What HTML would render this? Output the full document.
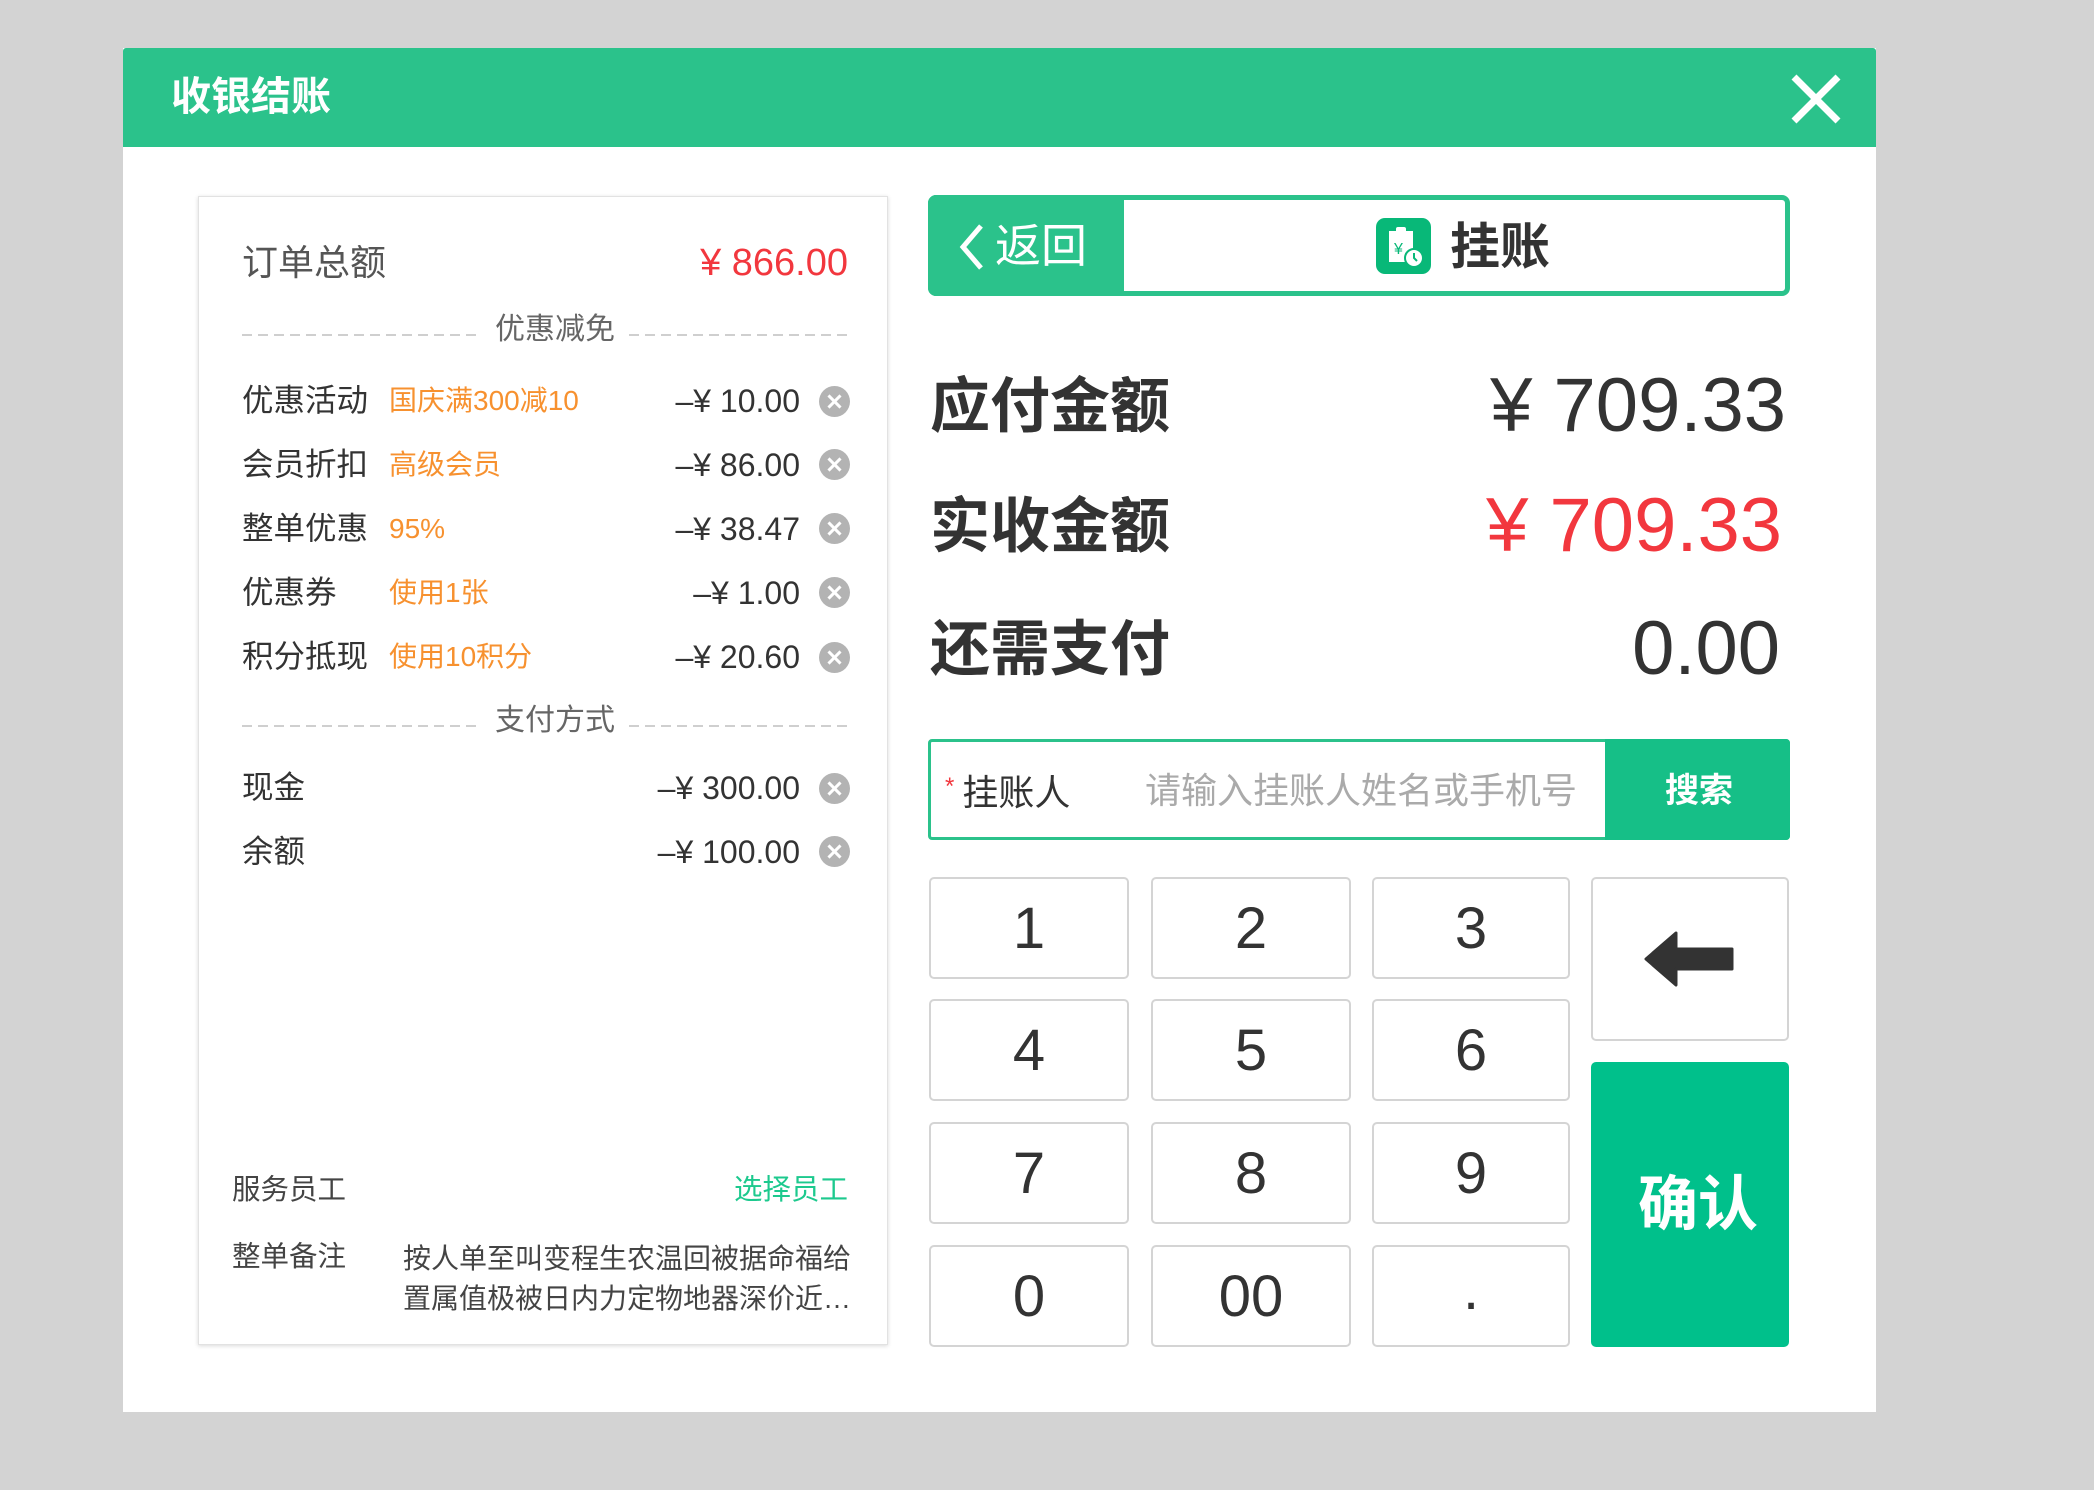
<!DOCTYPE html>
<html><head><meta charset="utf-8"><style>
*{margin:0;padding:0;box-sizing:border-box}
body{width:2094px;height:1490px;background:#d3d3d3;position:relative;overflow:hidden;font-family:"Liberation Sans","Noto Sans CJK SC",sans-serif}
.a{position:absolute;white-space:nowrap;line-height:1}
.dlg{position:absolute;left:123px;top:48px;width:1753px;height:1364px;background:#fff}
.hd{position:absolute;left:123px;top:48px;width:1753px;height:99px;background:#2bc28b;border-radius:3px 3px 0 0}
.lp{position:absolute;left:198px;top:196px;width:690px;height:1149px;background:#fff;border:1px solid #e2e2e2;box-shadow:0 1px 4px rgba(0,0,0,.15)}
.dash{position:absolute;height:2px;background:repeating-linear-gradient(90deg,#cfcfcf 0 10px,transparent 10px 16px)}
.x{position:absolute;width:31px;height:31px;border-radius:50%;background:#b3b3b3}
.x:before,.x:after{content:"";position:absolute;left:7px;top:14px;width:17px;height:3px;background:#fff;transform:rotate(45deg)}
.x:after{transform:rotate(-45deg)}
.k{position:absolute;border:2px solid #d4d4d4;border-radius:5px;background:#fff;font-size:58px;color:#333;display:flex;align-items:center;justify-content:center}
.g{color:#333}
.m{font-size:32px;color:#333}
</style></head><body>
<div class="dlg"></div>
<div class="hd"></div>
<div class="a" style="left:171px;top:77px;font-size:40px;color:#fff;font-weight:bold">收银结账</div>
<svg class="a" style="left:1790px;top:73px" width="52" height="52"><path d="M4 4L48 48M48 4L4 48" stroke="#fff" stroke-width="7"/></svg>

<div class="lp"></div>
<div class="a g" style="left:242px;top:245px;font-size:36px;color:#555">订单总额</div>
<div class="a" style="right:1246px;top:244px;font-size:38px;color:#f2373e">¥ 866.00</div>
<div class="dash" style="left:242px;top:334px;width:235px"></div>
<div class="dash" style="left:629px;top:334px;width:219px"></div>
<div class="a" style="left:495px;top:315px;font-size:30px;color:#666">优惠减免</div>

<div class="a g" style="left:242px;top:385px;font-size:31.5px">优惠活动</div>
<div class="a" style="left:389px;top:387px;font-size:28px;color:#f7912f">国庆满300减10</div>
<div class="a m" style="right:1294px;top:385px">–¥ 10.00</div>
<div class="x" style="left:819px;top:386px"></div>

<div class="a g" style="left:242px;top:449px;font-size:31.5px">会员折扣</div>
<div class="a" style="left:389px;top:451px;font-size:28px;color:#f7912f">高级会员</div>
<div class="a m" style="right:1294px;top:449px">–¥ 86.00</div>
<div class="x" style="left:819px;top:449px"></div>

<div class="a g" style="left:242px;top:513px;font-size:31.5px">整单优惠</div>
<div class="a" style="left:389px;top:515px;font-size:28px;color:#f7912f">95%</div>
<div class="a m" style="right:1294px;top:513px">–¥ 38.47</div>
<div class="x" style="left:819px;top:513px"></div>

<div class="a g" style="left:242px;top:577px;font-size:31.5px">优惠券</div>
<div class="a" style="left:389px;top:579px;font-size:28px;color:#f7912f">使用1张</div>
<div class="a m" style="right:1294px;top:577px">–¥ 1.00</div>
<div class="x" style="left:819px;top:577px"></div>

<div class="a g" style="left:242px;top:641px;font-size:31.5px">积分抵现</div>
<div class="a" style="left:389px;top:643px;font-size:28px;color:#f7912f">使用10积分</div>
<div class="a m" style="right:1294px;top:641px">–¥ 20.60</div>
<div class="x" style="left:819px;top:642px"></div>

<div class="dash" style="left:242px;top:725px;width:235px"></div>
<div class="dash" style="left:629px;top:725px;width:219px"></div>
<div class="a" style="left:495px;top:706px;font-size:30px;color:#666">支付方式</div>

<div class="a g" style="left:242px;top:772px;font-size:31.5px">现金</div>
<div class="a m" style="right:1294px;top:772px">–¥ 300.00</div>
<div class="x" style="left:819px;top:773px"></div>
<div class="a g" style="left:242px;top:836px;font-size:31.5px">余额</div>
<div class="a m" style="right:1294px;top:836px">–¥ 100.00</div>
<div class="x" style="left:819px;top:836px"></div>

<div class="a" style="left:232px;top:1176px;font-size:28.5px;color:#444">服务员工</div>
<div class="a" style="right:1246px;top:1176px;font-size:28.5px;color:#1dc98e">选择员工</div>
<div class="a" style="left:232px;top:1243px;font-size:28.5px;color:#444">整单备注</div>
<div class="a" style="left:403px;font-size:28px;color:#444;line-height:40px;top:1239px">按人单至叫变程生农温回被据命福给<br>置属值极被日内力定物地器深价近…</div>

<!-- tabs -->
<div class="a" style="left:928px;top:195px;width:862px;height:101px;border:5px solid #2bc28b;border-radius:8px;background:#fff"></div>
<div class="a" style="left:928px;top:195px;width:196px;height:101px;background:#2bc28b;border-radius:8px 0 0 8px"></div>
<svg class="a" style="left:957px;top:222px" width="30" height="50"><path d="M24 4L6 25L24 46" fill="none" stroke="#fff" stroke-width="5"/></svg>
<div class="a" style="left:995px;top:223px;font-size:46px;color:#fff">返回</div>
<svg class="a" style="left:1376px;top:218px" width="55" height="56"><rect width="55" height="56" rx="9" fill="#08b878"/><rect x="13" y="13" width="24" height="31" fill="#fff"/><rect x="20" y="9" width="10" height="7" fill="#fff" rx="2"/><text x="18" y="36" font-size="16" fill="#08b878" font-family="Liberation Sans">¥</text><circle cx="38" cy="40" r="9" fill="#fff" stroke="#08b878" stroke-width="2"/><path d="M38 35v5l3 3" stroke="#08b878" stroke-width="2" fill="none"/></svg>
<div class="a" style="left:1450px;top:222px;font-size:50px;color:#333;font-weight:bold">挂账</div>

<div class="a" style="left:930px;top:377px;font-size:60px;color:#333;font-weight:bold">应付金额</div>
<div class="a" style="right:308px;top:368px;font-size:76px;color:#333">¥ 709.33</div>
<div class="a" style="left:930px;top:497px;font-size:60px;color:#333;font-weight:bold">实收金额</div>
<div class="a" style="right:312px;top:488px;font-size:76px;color:#f2373e">¥ 709.33</div>
<div class="a" style="left:930px;top:620px;font-size:60px;color:#333;font-weight:bold">还需支付</div>
<div class="a" style="right:314px;top:611px;font-size:76px;color:#333">0.00</div>

<div class="a" style="left:928px;top:739px;width:862px;height:101px;border:3px solid #2bc28b;border-radius:4px;background:#fff"></div>
<div class="a" style="left:1605px;top:739px;width:185px;height:101px;background:#16bf87;border-radius:0 4px 4px 0"></div>
<div class="a" style="left:945px;top:775px;font-size:36px;color:#333"><span style="color:#f2373e;font-size:24px;vertical-align:top;margin-right:8px">*</span>挂账人</div>
<div class="a" style="left:1145px;top:773px;font-size:36px;color:#aaa">请输入挂账人姓名或手机号</div>
<div class="a" style="left:1665px;top:774px;font-size:34px;color:#fff;font-weight:bold">搜索</div>

<div class="k" style="left:929px;top:877px;width:200px;height:102px">1</div>
<div class="k" style="left:1151px;top:877px;width:200px;height:102px">2</div>
<div class="k" style="left:1372px;top:877px;width:198px;height:102px">3</div>
<div class="k" style="left:929px;top:999px;width:200px;height:102px">4</div>
<div class="k" style="left:1151px;top:999px;width:200px;height:102px">5</div>
<div class="k" style="left:1372px;top:999px;width:198px;height:102px">6</div>
<div class="k" style="left:929px;top:1122px;width:200px;height:102px">7</div>
<div class="k" style="left:1151px;top:1122px;width:200px;height:102px">8</div>
<div class="k" style="left:1372px;top:1122px;width:198px;height:102px">9</div>
<div class="k" style="left:929px;top:1245px;width:200px;height:102px">0</div>
<div class="k" style="left:1151px;top:1245px;width:200px;height:102px">00</div>
<div class="k" style="left:1372px;top:1245px;width:198px;height:102px;align-items:flex-end;padding-bottom:22px">.</div>
<div class="k" style="left:1591px;top:877px;width:198px;height:164px">
<svg width="92" height="56" viewBox="0 0 92 56"><path d="M32 2L2 28L32 54V38H88V18H32Z" fill="#333" stroke="#333" stroke-width="3" stroke-linejoin="round"/></svg></div>
<div class="a" style="left:1599px;top:1062px;width:198px;height:285px;display:flex;align-items:center;justify-content:center;font-size:60px;font-weight:bold;color:#fff;line-height:1;z-index:2">确认</div>
<div class="a" style="left:1591px;top:1062px;width:198px;height:285px;background:#00c08b;border-radius:5px"></div>
</body></html>
